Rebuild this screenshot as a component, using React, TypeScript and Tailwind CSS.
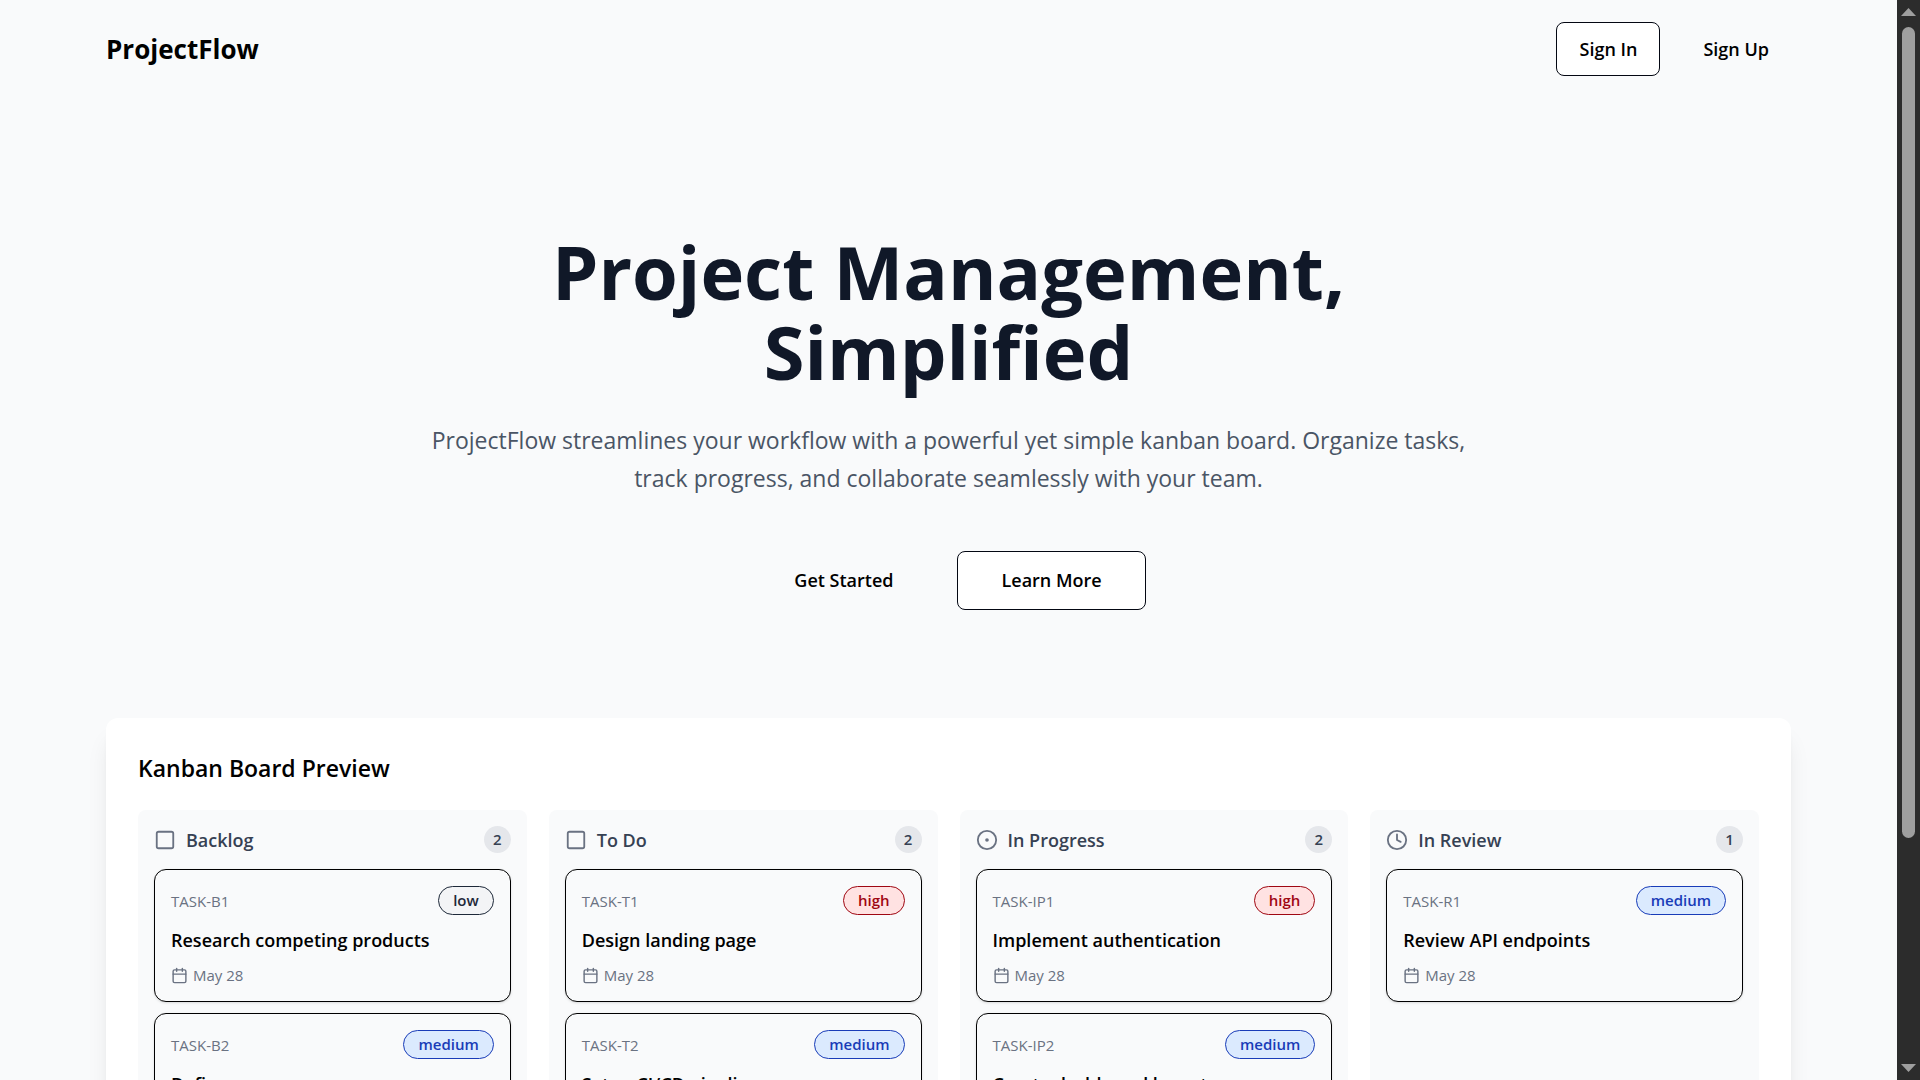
import { Calendar, CircleDot, Clock, Square, type LucideIcon } from "lucide-react";

type Priority = "low" | "medium" | "high";

interface Task {
  id: string;
  title: string;
  priority: Priority;
  due: string;
}

interface BoardColumn {
  name: string;
  icon: LucideIcon;
  tasks: Task[];
}

const columns: BoardColumn[] = [
  {
    name: "Backlog",
    icon: Square,
    tasks: [
      { id: "TASK-B1", title: "Research competing products", priority: "low", due: "May 28" },
      { id: "TASK-B2", title: "Define user personas", priority: "medium", due: "May 28" },
    ],
  },
  {
    name: "To Do",
    icon: Square,
    tasks: [
      { id: "TASK-T1", title: "Design landing page", priority: "high", due: "May 28" },
      { id: "TASK-T2", title: "Setup CI/CD pipeline", priority: "medium", due: "May 28" },
    ],
  },
  {
    name: "In Progress",
    icon: CircleDot,
    tasks: [
      { id: "TASK-IP1", title: "Implement authentication", priority: "high", due: "May 28" },
      { id: "TASK-IP2", title: "Create dashboard layout", priority: "medium", due: "May 28" },
    ],
  },
  {
    name: "In Review",
    icon: Clock,
    tasks: [{ id: "TASK-R1", title: "Review API endpoints", priority: "medium", due: "May 28" }],
  },
];

const priorityStyles: Record<Priority, string> = {
  low: "border-gray-800 bg-gray-100 text-gray-800",
  medium: "border-blue-800 bg-blue-100 text-blue-800",
  high: "border-red-800 bg-red-100 text-red-800",
};

function TaskCard({ task }: { task: Task }) {
  return (
    <li className="rounded-xl border border-black bg-gray-50 p-4 shadow-sm">
      <div className="flex items-center justify-between">
        <span className="text-[15px] leading-5 text-gray-500">{task.id}</span>
        <span
          className={`rounded-full border px-[14px] py-[3px] text-[15px] leading-[21px] font-semibold ${priorityStyles[task.priority]}`}
        >
          {task.priority}
        </span>
      </div>
      <h4 className="mt-3 text-[18px] leading-[26px] font-semibold text-black">{task.title}</h4>
      <div className="mt-3 flex items-center gap-[5px] text-gray-500">
        <Calendar className="size-[17px]" />
        <span className="text-[15px] leading-5">{task.due}</span>
      </div>
    </li>
  );
}

function Column({ column }: { column: BoardColumn }) {
  const Icon = column.icon;
  return (
    <section className="rounded-lg bg-gray-50 p-4">
      <div className="mb-4 flex items-center justify-between">
        <div className="flex items-center gap-[10px]">
          <Icon className="size-[22px] text-gray-500" />
          <h3 className="text-[18px] leading-[26px] font-semibold text-gray-700">{column.name}</h3>
        </div>
        <span className="flex size-[27px] items-center justify-center rounded-full bg-gray-200 text-[15px] font-semibold text-gray-700">
          {column.tasks.length}
        </span>
      </div>
      <ul className="flex flex-col gap-[11px]">
        {column.tasks.map((task) => (
          <TaskCard key={task.id} task={task} />
        ))}
      </ul>
    </section>
  );
}

function ScrollTrack() {
  return (
    <div aria-hidden="true" className="flex w-[23px] shrink-0 flex-col items-center bg-[#2c2c2c] py-2">
      <svg className="h-2 w-[15px]" viewBox="0 0 15 8">
        <path d="M7.5 0 15 8H0Z" fill="#9f9f9f" />
      </svg>
      <div className="flex w-full grow flex-col items-center py-[11px]">
        <div className="h-[79%] w-[13px] rounded-full bg-[#9f9f9f]" />
      </div>
      <svg className="h-2 w-[15px]" viewBox="0 0 15 8">
        <path d="M0 0H15L7.5 8Z" fill="#9f9f9f" />
      </svg>
    </div>
  );
}

export default function App() {
  return (
    <div className="flex h-screen overflow-hidden bg-gray-50 font-['Open_Sans','Noto_Sans',sans-serif] text-black">
      <div className="min-w-0 grow overflow-hidden px-[106px]">
        <header className="flex items-center justify-between py-[22px]">
          <span className="text-[26px] leading-9 font-bold">ProjectFlow</span>
          <nav className="flex gap-[21px]">
            <button className="rounded-lg border border-gray-950 bg-white px-[22px] py-[13px] text-[18px] leading-[26px] font-semibold">
              Sign In
            </button>
            <button className="rounded-lg px-[22px] py-[13px] text-[18px] leading-[26px] font-semibold">
              Sign Up
            </button>
          </nav>
        </header>

        <main>
          <section className="mx-auto flex max-w-[1060px] flex-col items-center pt-[134px] pb-[108px] text-center">
            <h1 className="text-[74px] leading-[80px] font-bold text-gray-900">
              Project Management,
              <br />
              Simplified
            </h1>
            <p className="mt-[29px] text-[23px] leading-[38px] text-gray-600">
              ProjectFlow streamlines your workflow with a powerful yet simple kanban board. Organize tasks,
              track progress, and collaborate seamlessly with your team.
            </p>
            <div className="mt-[54px] flex gap-[21px]">
              <button className="rounded-lg px-[43px] py-[16px] text-[18px] leading-[27px] font-semibold">
                Get Started
              </button>
              <button className="rounded-lg border border-gray-950 bg-white px-[43px] py-[15px] text-[18px] leading-[27px] font-semibold">
                Learn More
              </button>
            </div>
          </section>

          <section className="rounded-xl bg-white p-8 shadow-xl">
            <h2 className="text-[23px] leading-9 font-semibold">Kanban Board Preview</h2>
            <div className="mt-6 grid grid-cols-4 gap-[22px]">
              {columns.map((column) => (
                <Column key={column.name} column={column} />
              ))}
            </div>
          </section>
        </main>
      </div>
      <ScrollTrack />
    </div>
  );
}
